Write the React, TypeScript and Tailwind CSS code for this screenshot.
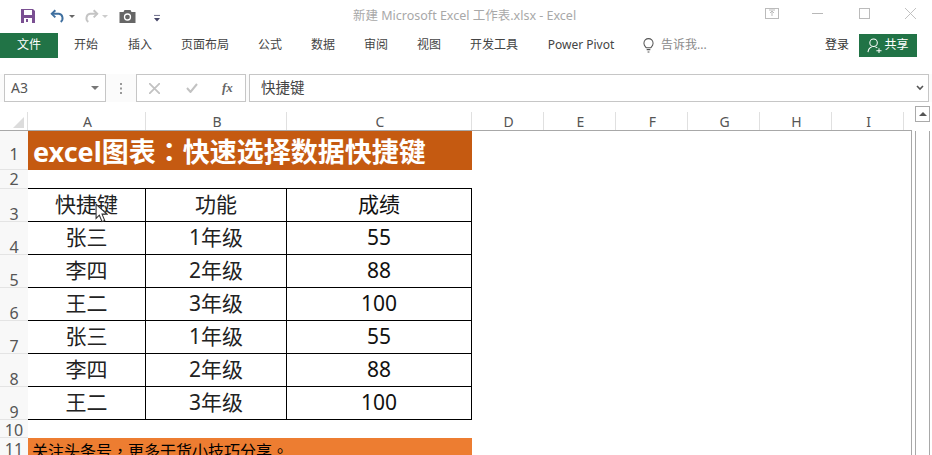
const cjk = "font-['Noto_Sans','Noto_Sans_CJK_SC',sans-serif]";
const centeredPunct = "font-['Noto_Sans_CJK_TC',sans-serif]";

const tabs = [
  { label: "开始", w: "w-[56px]" },
  { label: "插入", w: "w-[52px]" },
  { label: "页面布局", w: "w-[78px]" },
  { label: "公式", w: "w-[52px]" },
  { label: "数据", w: "w-[54px]" },
  { label: "审阅", w: "w-[52px]" },
  { label: "视图", w: "w-[54px]" },
  { label: "开发工具", w: "w-[76px]" },
  { label: "Power Pivot", w: "w-[98px]" },
];

const cols = [
  { label: "A", w: "w-[118px]" },
  { label: "B", w: "w-[141px]" },
  { label: "C", w: "w-[185px]" },
  { label: "D", w: "w-[72px]" },
  { label: "E", w: "w-[72px]" },
  { label: "F", w: "w-[72px]" },
  { label: "G", w: "w-[72px]" },
  { label: "H", w: "w-[72px]" },
  { label: "I", w: "w-[72px]" },
];

const rows = [
  ["张三", "1年级", "55"],
  ["李四", "2年级", "88"],
  ["王二", "3年级", "100"],
  ["张三", "1年级", "55"],
  ["李四", "2年级", "88"],
  ["王二", "3年级", "100"],
];

function RowNum({ n, h, pb }: { n: number; h: string; pb?: string }) {
  return (
    <div className={`${h} ${pb ?? ""} w-[28px] shrink-0 flex items-end justify-center text-[16px] leading-[14px] text-[#555] border-b border-[#e4e4e4] bg-[#f8f8f8]`}>
      {n}
    </div>
  );
}

function TableRow({ n, cells }: { n: number; cells: string[] }) {
  return (
    <div className="flex h-[33px]">
      <RowNum n={n} h="h-[33px]" />
      <div className="w-[118px] border-b border-r border-black flex items-center justify-center text-[21px] text-[#222]">{cells[0]}</div>
      <div className="w-[141px] border-b border-r border-black flex items-center justify-center text-[21px] text-[#222]">{cells[1]}</div>
      <div className="w-[185px] border-b border-r border-black flex items-center justify-center text-[21px] text-[#111]">{cells[2]}</div>
    </div>
  );
}

export default function App() {
  return (
    <div className={`w-[932px] h-[455px] overflow-hidden bg-white relative ${cjk}`}>
      {/* Title bar */}
      <div className="h-[32px] flex items-center pl-[20px] relative">
        <svg viewBox="0 0 16 16" className="w-[16px] h-[16px] mr-[14px]">
          <path d="M1 1h12l2 2v12H1z" fill="#7a4f92" />
          <rect x="4" y="2" width="8" height="5" fill="#fff" />
          <rect x="4" y="10" width="8" height="5" fill="#fff" />
          <rect x="6" y="11" width="2" height="3" fill="#7a4f92" />
        </svg>
        <svg viewBox="0 0 18 16" className="w-[16px] h-[15px]" fill="none" stroke="#3f6f9f" strokeWidth="2.2">
          <path d="M6 1 2 5l4 4" />
          <path d="M2 5h8a5 5 0 0 1 2 9" />
        </svg>
        <span className="ml-[3px] w-0 h-0 border-x-[3px] border-x-transparent border-t-[3px] border-t-[#666]" />
        <svg viewBox="0 0 18 16" className="w-[16px] h-[15px] ml-[8px]" fill="none" stroke="#c4c4c4" strokeWidth="2.2">
          <path d="m12 1 4 4-4 4" />
          <path d="M16 5H8a5 5 0 0 0-2 9" />
        </svg>
        <span className="ml-[3px] w-0 h-0 border-x-[3px] border-x-transparent border-t-[3px] border-t-[#ccc]" />
        <svg viewBox="0 0 16 14" className="w-[17px] h-[14px] ml-[11px]">
          <path d="M0 3h4l1-2h6l1 2h4v11H0z" fill="#666" />
          <circle cx="8" cy="8" r="3" fill="none" stroke="#fff" strokeWidth="1.3" />
        </svg>
        <svg viewBox="0 0 7 8" className="w-[6px] h-[8px] ml-[18px] mt-[3px]">
          <path d="M0 1h7" stroke="#557" strokeWidth="1" />
          <path d="M0 4h7L3.500 8z" fill="#446" />
        </svg>
        <div className="absolute left-[353px] top-[7px] text-[12.5px] leading-[17px] text-[#a8a8a8] whitespace-nowrap">
          新建 Microsoft Excel 工作表.xlsx - Excel
        </div>
        <div className="ml-auto flex items-center">
          <svg viewBox="0 0 14 11" className="w-[14px] h-[11px] mr-[33px] -mt-[6px]" fill="none" stroke="#bbb" strokeWidth="1">
            <rect x="0.500" y="0.500" width="13" height="10" />
            <path d="M7 8V3M5 5l2-2 2 2M4 2h6" />
          </svg>
          <div className="w-[11px] h-px bg-[#b8b8b8] mr-[36px] -mt-[6px]" />
          <div className="w-[11px] h-[11px] border border-[#bbb] mr-[35px] -mt-[6px]" />
          <svg viewBox="0 0 12 12" className="w-[11px] h-[11px] mr-[16px] -mt-[6px]" stroke="#bbb" strokeWidth="1">
            <path d="m0 0 12 12M12 0 0 12" />
          </svg>
        </div>
      </div>

      {/* Tabs */}
      <div className="h-[26px] flex items-center text-[12px] text-[#444]">
        <div className="w-[58px] h-[25px] bg-[#217346] text-white flex items-center justify-center">文件</div>
        {tabs.map((t) => (
          <div key={t.label} className={`${t.w} text-center whitespace-nowrap`}>{t.label}</div>
        ))}
        <div className="flex items-center ml-[13px] text-[#8a8a8a]">
          <svg viewBox="0 0 12 16" className="w-[11px] h-[15px] mr-[7px]" fill="none" stroke="#555" strokeWidth="1.1">
            <path d="M3.500 10.500C2.500 9 1 8 1 5.500a5 5 0 0 1 10 0c0 2.500-1.500 3.500-2.500 5zM4 12.500h4M5 15h2" />
          </svg>
          告诉我...
        </div>
        <div className="ml-auto text-[#333] mr-[10px]">登录</div>
        <div className="w-[58px] h-[23px] bg-[#217346] text-white flex items-center justify-center mr-[15px]">
          <svg viewBox="0 0 16 16" className="w-[15px] h-[15px] mr-[2px]" fill="none" stroke="#fff" strokeWidth="1.1">
            <circle cx="7" cy="5" r="4" />
            <path d="M1 15c.5-3 2-5 4-5.500M9 9.500c.8.200 1.400.5 2 1M10 13.500h5.500M12.800 11v5" />
          </svg>
          共享
        </div>
      </div>

      <div className="h-[16px]" />

      {/* Formula bar */}
      <div className="h-[28px] bg-[#fbfbfb] flex items-stretch pl-[4px] pr-[3px]">
        <div className="w-[102px] bg-white border border-[#c6c6c6] flex items-center justify-between pl-[6px] pr-[6px] pb-px text-[14px] text-[#555]">
          A3
          <span className="w-0 h-0 border-x-[4px] border-x-transparent border-t-[4px] border-t-[#777]" />
        </div>
        <div className="w-[30px] flex items-center justify-center">
          <svg viewBox="0 0 2 11" className="w-[2px] h-[11px]" fill="#999">
            <rect y="0" width="2" height="2" />
            <rect y="4.500" width="2" height="2" />
            <rect y="9" width="2" height="2" />
          </svg>
        </div>
        <div className="w-[110px] bg-white border border-[#c6c6c6] flex items-center pl-[12px]">
          <svg viewBox="0 0 10 10" className="w-[11px] h-[11px]" stroke="#c2c2c2" strokeWidth="1.6">
            <path d="m0 0 10 10M10 0 0 10" />
          </svg>
          <svg viewBox="0 0 12 10" className="w-[12px] h-[10px] ml-[26px]" fill="none" stroke="#c2c2c2" strokeWidth="2">
            <path d="m1 5 3.500 4L11 1" />
          </svg>
          <span className="ml-[24px] text-[13px] italic font-bold font-['Liberation_Serif',serif] text-[#666]">
            fx
          </span>
        </div>
        <div className="w-[3px]" />
        <div className="flex-1 bg-white border border-[#c6c6c6] flex items-center justify-between pl-[11px] pr-[4px] pb-px text-[14.5px] text-[#444]">
          快捷键
          <svg viewBox="0 0 8 6" className="w-[8px] h-[6px]" fill="none" stroke="#555" strokeWidth="1.600">
            <path d="m1 1 3 3 3-3" />
          </svg>
        </div>
      </div>

      <div className="h-[10px]" />

      {/* Column headers */}
      <div className="h-[19px] flex items-stretch">
        <div className="w-[912px] shrink-0 flex items-stretch border-b border-[#a8a8a8]">
          <div className="w-[28px] relative border-r border-[#e0e0e0]">
            <div className="absolute right-[3px] bottom-[2px] w-0 h-0 border-l-[11px] border-l-transparent border-b-[11px] border-b-[#dcdcdc]" />
          </div>
          {cols.map((c) => (
            <div key={c.label} className={`${c.w} shrink-0 border-r border-[#e0e0e0] pl-[2px] flex items-center justify-center text-[14px] text-[#555]`}>
              {c.label}
            </div>
          ))}
        </div>
        <div className="ml-[3px] mt-[-6px] w-[15px] h-[16px] border border-[#aaa] bg-white flex items-center justify-center">
          <span className="w-0 h-0 border-x-[4px] border-x-transparent border-b-[4px] border-b-[#555]" />
        </div>
      </div>

      {/* Sheet */}
      <div className="flex">
        <div className="w-[912px] border-r border-[#a8a8a8] shrink-0">
          <div className="flex h-[39px]">
            <RowNum n={1} h="h-[39px]" pb="pb-[8px]" />
            <div className="w-[444px] h-[39px] bg-[#c55a11] text-white font-bold text-[27px] leading-[39px] pl-[5px] whitespace-nowrap">
              excel图表<span className={centeredPunct}>：</span>快速选择数据快捷键
            </div>
          </div>
          <div className="flex h-[19px] items-stretch">
            <RowNum n={2} h="h-[19px]" pb="pb-[2px]" />
            <div className="w-[444px] border-b border-black" />
          </div>
          <TableRow n={3} cells={["快捷键", "功能", "成绩"]} />
          {rows.map((r, i) => (
            <TableRow key={i} n={i + 4} cells={r} />
          ))}
          <div className="flex h-[18px]">
            <RowNum n={10} h="h-[18px]" />
          </div>
          <div className="flex h-[19px]">
            <RowNum n={11} h="h-[19px]" />
            <div className="w-[444px] h-[19px] bg-[#ed7d31] text-black text-[16px] leading-[24px] pl-[4px] whitespace-nowrap overflow-hidden">
              关注头条号<span className={centeredPunct}>，</span>更多干货小技巧分享<span className={centeredPunct}>。</span>
            </div>
          </div>
        </div>
        <div className="ml-[3px] w-[15px] border-x border-[#a8a8a8]" />
      </div>

      {/* Mouse pointer over A3 */}
      <svg viewBox="0 0 12 18" className="absolute left-[95px] top-[203px] w-[13px] h-[20px]">
        <path d="M1 1v13l3-3 2.500 6 2.500-1-2.500-6H11z" fill="#fff" stroke="#333" strokeWidth="1" />
      </svg>
    </div>
  );
}
